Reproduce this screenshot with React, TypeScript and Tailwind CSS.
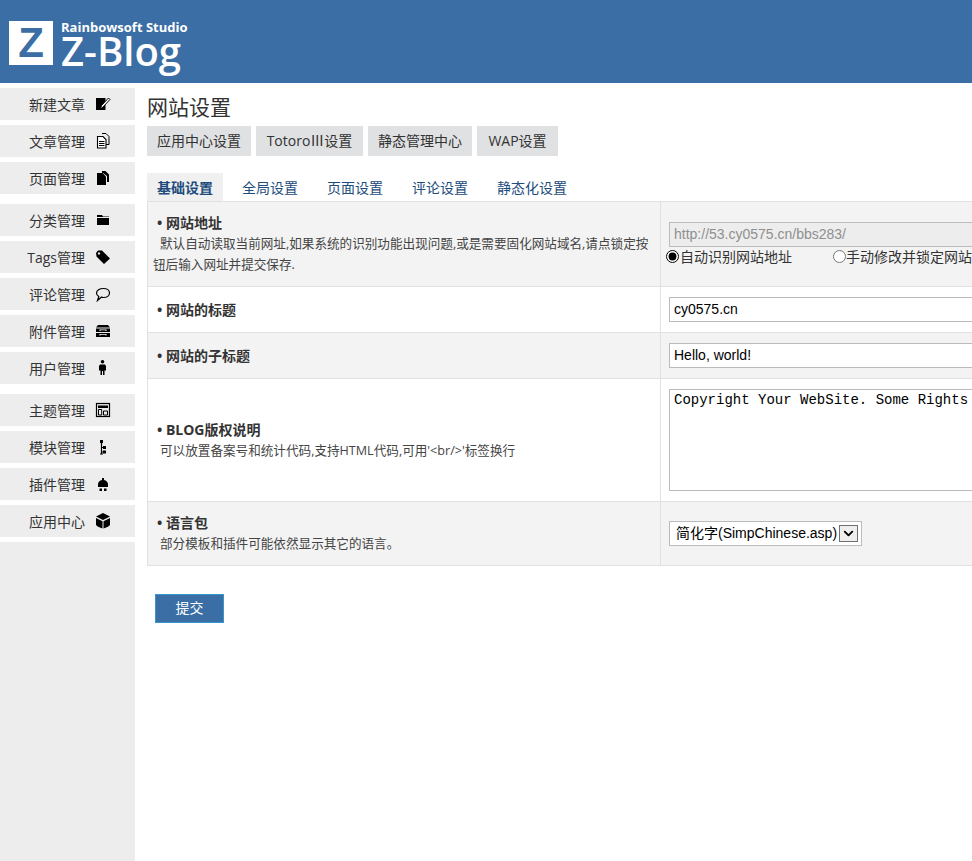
import type { ReactNode } from 'react'
import { ChevronDown } from 'lucide-react'

const font = 'font-["Open_Sans","Noto_Sans_CJK_SC",sans-serif]'

const icons: Record<string, ReactNode> = {
  edit: (
    <>
      <rect x="1" y="2" width="9.500" height="12" fill="#000" />
      <path d="M5.500 13 6.500 9.500 13.500 2 15 3.500 8 11z" fill="#fff" stroke="#000" strokeWidth="1" />
    </>
  ),
  article: (
    <>
      <path d="M7 .5h4l3 3v8h-3" fill="none" stroke="#000" strokeWidth="1" />
      <path d="M2.500 3.500h5.500l3 3v8.500H2.500z" fill="#fff" stroke="#000" strokeWidth="1.100" />
      <path d="M4 8.500h5.500M4 10.500h5.500M4 12.500h5.500" stroke="#000" strokeWidth="1" />
    </>
  ),
  page: (
    <>
      <path d="M7 1h3.500L14 4.500V12h-2V6L8 3H7z" fill="#000" />
      <path d="M2 3h5.500L11 6.500V15H2z" fill="#000" />
    </>
  ),
  folder: <path d="M2 5V3h5l1 1.500h6V5zM2 6h12v7H2z" fill="#000" />,
  tag: <path d="M1 4l2-2.500h4L15 9.500 9 15 1.500 7.500zM4 3.300a1.200 1.200 0 1 0 .01 0z" fill="#000" fillRule="evenodd" />,
  comment: <path d="M8.500 2.500c3.500 0 6 1.900 6 4.500s-2.500 4.500-6 4.500c-.8 0-1.500-.1-2.200-.3L2.500 14.500l1.300-4C2.300 9.600 1.500 8.400 1.500 7c0-2.600 3-4.500 7-4.500z" fill="none" stroke="#000" strokeWidth="1.200" />,
  archive: (
    <>
      <path d="M3 2h10l2 2.500H1zM1 5.500h14v3.500H1zM1 10h14v4H1z" fill="#000" />
      <path d="M4.500 6.500h7v1.500h-1V7.300h-5V8h-1zM4.500 11h7v1.500h-1v-.7h-5v.7h-1z" fill="#fff" />
    </>
  ),
  user: (
    <>
      <circle cx="7.500" cy="1.800" r="1.800" fill="#000" />
      <path d="M5 4.500h5l1 1.500v4.500h-1.500V15H8v-4H7v4H5.500v-4.500H4V6z" fill="#000" />
    </>
  ),
  theme: (
    <>
      <rect x="1.500" y="1.500" width="13" height="13" fill="none" stroke="#000" strokeWidth="1.200" />
      <rect x="3" y="3.500" width="10" height="2.500" fill="#000" />
      <path d="M3.500 7.500h3.200v5.500H3.500zM8.500 9h4v4h-4z" fill="none" stroke="#000" strokeWidth="1" />
    </>
  ),
  module: (
    <>
      <path d="M5 1h3v3H5zM8 7h3v3H8zM8 11.500h3v3H8z" fill="#000" />
      <path d="M6.500 4v11M6.500 8.500H8M6.500 13H8M5 15h3" stroke="#000" strokeWidth="1.200" />
    </>
  ),
  plugin: (
    <>
      <path d="M7 2h2v2c2.200.4 4 2 4 4.500V11H3V8.500C3 6 4.800 4.400 7 4z" fill="#000" />
      <path d="M4.500 12.500H7V15H4.500zM9 12.500h2.500V15H9z" fill="#000" />
    </>
  ),
  cube: (
    <>
      <path d="M8 0 15 3.500 8 7 1 3.500z" fill="#000" />
      <path d="M1 5 7.500 8.300V15.500L3 13.700 1 12zM15 5 8.500 8.300V15.500L13 13.700 15 12z" fill="#000" />
    </>
  ),
}

const menuGroups = [
  [
    ['新建文章', 'edit'],
    ['文章管理', 'article'],
    ['页面管理', 'page'],
  ],
  [
    ['分类管理', 'folder'],
    ['Tags管理', 'tag'],
    ['评论管理', 'comment'],
    ['附件管理', 'archive'],
    ['用户管理', 'user'],
  ],
  [
    ['主题管理', 'theme'],
    ['模块管理', 'module'],
    ['插件管理', 'plugin'],
    ['应用中心', 'cube'],
  ],
]

const tabs = ['全局设置', '页面设置', '评论设置', '静态化设置']

function Row({ height, shaded, left, children }: { height: string; shaded?: boolean; left: ReactNode; children: ReactNode }) {
  return (
    <div className={`flex border-b border-[#e1e1e1] ${height} ${shaded ? 'bg-[#f3f3f3]' : 'bg-white'}`}>
      <div className="flex w-[513px] shrink-0 flex-col justify-center border-r border-[#e1e1e1] pl-[5px]">{left}</div>
      <div className="flex min-w-0 flex-1 flex-col justify-center pl-[8px]">{children}</div>
    </div>
  )
}

function Label({ title, children }: { title: string; children?: ReactNode }) {
  return (
    <>
      <div className="pl-[4px] text-[14px] leading-[20px] font-bold text-[#333]">• {title}</div>
      {children && <div className="text-[12.6px] leading-[21px] text-[#444]">{children}</div>}
    </>
  )
}

const inputClass = 'h-[25px] w-[400px] border border-[#bbb] px-[4px] pb-[1px] font-["Liberation_Sans",sans-serif] text-[14px] outline-none'

export default function App() {
  return (
    <div className={`h-[861px] w-[972px] overflow-hidden bg-white ${font}`}>
      <header className="flex h-[83px] items-start bg-[#3a6ea5] pt-[21px] pl-[9px]">
        <div className="flex h-[44px] w-[44px] items-center justify-center bg-white font-['Liberation_Sans',sans-serif] text-[42px] leading-none font-bold text-[#3a6ea5]">Z</div>
        <div className="ml-[8px] text-white">
          <div className="h-[14px] text-[13px] leading-[12px] font-bold whitespace-nowrap">Rainbowsoft Studio</div>
          <div className="h-[32px] text-[40px] leading-[32px] font-semibold whitespace-nowrap">Z-Blog</div>
        </div>
      </header>

      <div className="flex h-[778px]">
        <aside className="flex w-[135px] shrink-0 flex-col bg-white pt-[5px]">
          {menuGroups.map((group, i) => (
            <div key={i} className={`flex flex-col gap-[5px] ${i > 0 ? 'mt-[10px]' : ''}`}>
              {group.map(([name, icon]) => (
                <div key={name} className="flex h-[32px] items-center bg-[#ededed]">
                  <span className="w-[85px] text-right text-[14px] whitespace-nowrap text-[#333]">{name}</span>
                  <svg viewBox="0 0 16 16" className="ml-[10px] h-[16px] w-[16px]">{icons[icon]}</svg>
                </div>
              ))}
            </div>
          ))}
          <div className="mt-[5px] flex-1 bg-[#ededed]" />
        </aside>

        <main className="min-w-0 flex-1 pl-[12px]">
          <h1 className="mt-[10px] h-[33px] text-[21px] leading-[28px] font-normal text-[#333]">网站设置</h1>
          <div className="flex gap-[5px] text-[14px] whitespace-nowrap text-[#333]">
            <div className="flex h-[30px] w-[104px] items-center justify-center bg-[#e0e1e3] pb-[1px]">应用中心设置</div>
            <div className="flex h-[30px] w-[107px] items-center justify-center bg-[#e0e1e3] pb-[1px]">
              Totoro<span className="font-['Noto_Sans_CJK_SC',sans-serif]">Ⅲ</span>设置
            </div>
            <div className="flex h-[30px] w-[104px] items-center justify-center bg-[#e0e1e3] pb-[1px]">静态管理中心</div>
            <div className="flex h-[30px] w-[81px] items-center justify-center bg-[#e0e1e3] pb-[1px]">WAP设置</div>
          </div>
          <div className="mt-[17px] flex h-[28px] items-center">
            <div className="flex h-[28px] w-[76px] items-center justify-center bg-[#f0f0f0] text-[14px] font-bold text-[#1d4c7d]">基础设置</div>
            <div className="ml-[19px] flex gap-[29px] text-[14px] text-[#1d4c7d]">
              {tabs.map(t => (
                <span key={t}>{t}</span>
              ))}
            </div>
          </div>

          <div className="w-[900px] border-t border-l border-[#e1e1e1]">
            <Row
              height="h-[85px]"
              shaded
              left={
                <Label title="网站地址">
                  <span className="pl-[7px]">默认自动读取当前网址,如果系统的识别功能出现问题,或是需要固化网站域名,请点锁定按</span>
                  <br />
                  钮后输入网址并提交保存.
                </Label>
              }
            >
              <input className={`${inputClass} bg-[#ededed] text-[#8f8f8f]`} disabled defaultValue="http://53.cy0575.cn/bbs283/" />
              <div className="-ml-[3px] flex h-[20px] items-center text-[14px] whitespace-nowrap text-[#333]">
                <input type="radio" name="site" defaultChecked className="m-0 h-[13px] w-[13px] accent-black" />
                <span className="ml-[1px] w-[153px]">自动识别网站地址</span>
                <input type="radio" name="site" className="m-0 h-[13px] w-[13px]" />
                <span>手动修改并锁定网站</span>
              </div>
            </Row>
            <Row height="h-[46px]" left={<Label title="网站的标题" />}>
              <input className={`${inputClass} bg-white text-black`} defaultValue="cy0575.cn" />
            </Row>
            <Row height="h-[46px]" shaded left={<Label title="网站的子标题" />}>
              <input className={`${inputClass} bg-white text-black`} defaultValue="Hello, world!" />
            </Row>
            <Row
              height="h-[123px]"
              left={
                <Label title="BLOG版权说明">
                  <span className="pl-[7px]">可以放置备案号和统计代码,支持HTML代码,可用'&lt;br/&gt;'标签换行</span>
                </Label>
              }
            >
              <textarea
                className="h-[102px] w-[400px] resize-none border border-[#bbb] bg-white px-[4px] pt-[2px] font-['Liberation_Mono',monospace] text-[14px] leading-[16px] whitespace-pre text-black outline-none"
                defaultValue="Copyright Your WebSite. Some Rights Reserved."
              />
            </Row>
            <Row
              height="h-[64px]"
              shaded
              left={
                <Label title="语言包">
                  <span className="pl-[7px]">部分模板和插件可能依然显示其它的语言。</span>
                </Label>
              }
            >
              <div className="flex h-[25px] w-[193px] items-center border border-[#bbb] bg-white pl-[6px] font-['Liberation_Sans','Noto_Sans_CJK_SC',sans-serif] text-[14px] whitespace-nowrap text-black">
                <span className="w-[163px]">简化字(SimpChinese.asp)</span>
                <span className="flex h-[17px] w-[19px] items-center justify-center border border-[#707070] bg-[#eee]">
                  <ChevronDown size={15} strokeWidth={3} color="#000" />
                </span>
              </div>
            </Row>
          </div>

          <button type="button" className="mt-[28px] ml-[8px] block h-[29px] w-[69px] border border-[#3399cc] bg-[#3a6ea5] pb-[2px] text-[14px] text-white">提交</button>
        </main>
      </div>
    </div>
  )
}
